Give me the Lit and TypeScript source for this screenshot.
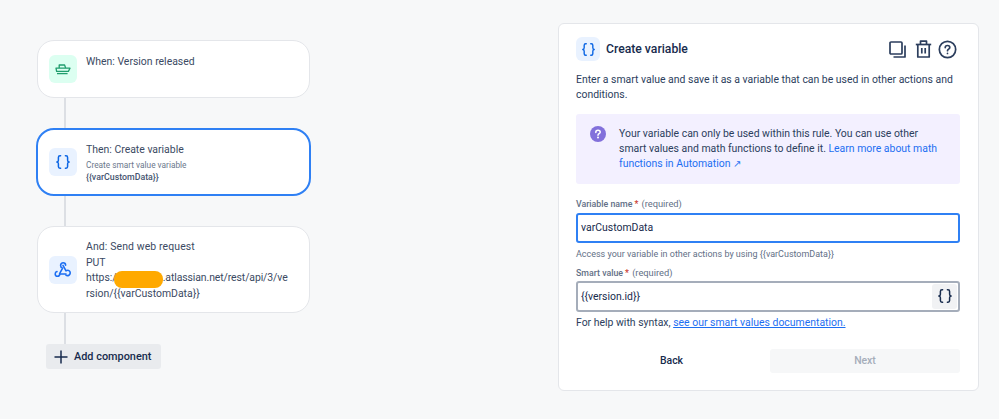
import { LitElement, html, css } from "lit";
import { customElement } from "lit/decorators.js";

const braces = (size: number, color: string) => html`<svg width=${size} height=${size} viewBox="0 0 16 16" fill="none" stroke=${color} stroke-width="1.5" stroke-linecap="round" stroke-linejoin="round">
  <path d="M5.6 1.8H5C3.9 1.8 3.4 2.4 3.4 3.4V6.2C3.4 7.2 2.9 7.8 1.9 8C2.9 8.2 3.4 8.8 3.4 9.8V12.6C3.4 13.6 3.9 14.2 5 14.2H5.6"/>
  <path d="M10.4 1.8H11C12.1 1.8 12.6 2.4 12.6 3.4V6.2C12.6 7.2 13.1 7.8 14.1 8C13.1 8.2 12.6 8.8 12.6 9.8V12.6C12.6 13.6 12.1 14.2 11 14.2H10.4"/>
</svg>`;

@customElement("app-root")
export class AppRoot extends LitElement {
  static styles = css`
    :host {
      display: flex;
      width: 999px;
      height: 419px;
      box-sizing: border-box;
      overflow: hidden;
      background: #f7f8f9;
      font-family: "Roboto", "Noto Sans", sans-serif;
      color: #2c3e5d;
      font-size: 10.45px;
    }
    .flow {
      width: 558px;
      flex: none;
      box-sizing: border-box;
      padding: 40px 0 0 37px;
      display: flex;
      flex-direction: column;
      align-items: flex-start;
    }
    .card {
      width: 273px;
      box-sizing: border-box;
      background: #fff;
      border: 1px solid #e4e6ea;
      border-radius: 17px;
      display: flex;
      gap: 9px;
      padding: 0 11px;
    }
    .c1 { height: 58px; padding-top: 14px; align-items: flex-start; }
    .c2 {
      width: 275px;
      height: 68px;
      margin-left: -1px;
      border: 2px solid #2f80f4;
      border-radius: 18px;
      align-items: center;
    }
    .c3 { height: 87px; align-items: center; }
    .ico {
      width: 28px;
      height: 28px;
      flex: none;
      border-radius: 6px;
      display: flex;
      align-items: center;
      justify-content: center;
      background: #e9f2ff;
    }
    .ico.green { background: #dcfff1; }
    .line { width: 2px; background: #dcdfe4; margin-left: 27px; }
    .l30 { height: 30px; }
    .l31 { height: 31px; }
    .t { line-height: 15px; color: #3b4a63; }
    .c1 .t { margin-top: -1px; }
    .sub { font-size: 8.3px; line-height: 12px; color: #6b778c; margin-top: 2px; }
    .var { font-size: 8.8px; line-height: 12px; font-weight: 500; color: #44546f; }
    .req { line-height: 15.6px; color: #3b4a63; white-space: nowrap; padding-top: 1px; }
    .req .t { margin-bottom: 1px; letter-spacing: 0.12px; }
    .url { letter-spacing: -0.1px; }
    .blob {
      display: inline-block;
      width: 49px;
      height: 17px;
      margin: -3px 0 -3px -3px;
      vertical-align: -4px;
      border-radius: 8px;
      background: #ffa900;
    }
    .add {
      margin-left: 9px;
      width: 115px;
      height: 25px;
      box-sizing: border-box;
      background: #e9ebee;
      border-radius: 3px;
      display: flex;
      align-items: center;
      gap: 6px;
      padding-left: 8px;
      font-weight: 500;
      font-size: 10.9px;
      color: #172b4d;
    }
    .panel {
      width: 421px;
      height: 368px;
      margin-top: 23px;
      box-sizing: border-box;
      background: #fff;
      border: 1px solid #e4e6ea;
      border-radius: 6px;
      padding: 13px 18px 0 17px;
      display: flex;
      flex-direction: column;
    }
    .head { display: flex; align-items: center; gap: 6px; height: 24px; }
    .head .ico { width: 24px; height: 24px; }
    .head h1 { margin: 0; font-size: 12.2px; font-weight: 500; color: #172b4d; flex: 1; }
    .acts { display: flex; align-items: center; gap: 6px; margin-right: 3px; }
    .acts .copy { margin-right: 3px; }
    .desc { margin: 11px 0 0; line-height: 15.3px; color: #2c3e5d; }
    .info {
      margin-top: 11px;
      height: 70px;
      box-sizing: border-box;
      background: #f3f0ff;
      border-radius: 3px;
      display: flex;
      gap: 13px;
      padding: 12px 14px;
      line-height: 15.3px;
      color: #2c3e5d;
    }
    .info svg { flex: none; }
    a { color: #1d6ff2; text-decoration: none; }
    a.u { text-decoration: underline; }
    .label { font-size: 8.8px; font-weight: 500; color: #626f86; line-height: 12px; }
    .label i { color: #c9372c; font-style: normal; margin-left: 2px; }
    .label span { font-size: 9.3px; font-weight: 400; color: #626f86; margin-left: 1px; }
    .l1 { margin-top: 14px; }
    .l2 { margin-top: 7px; }
    .input {
      height: 30px;
      box-sizing: border-box;
      margin-top: 3px;
      border: 2px solid #2f80f4;
      border-radius: 3px;
      display: flex;
      align-items: center;
      padding-left: 3px;
      color: #172b4d;
    }
    .input.two { height: 31px; border: 2px solid #a5adba; margin-top: 2px; padding-right: 1px; justify-content: space-between; }
    .brace { width: 25px; height: 25px; background: #f1f2f4; border-radius: 3px; display: flex; align-items: center; justify-content: center; }
    .hint { font-size: 8.97px; color: #626f86; line-height: 12px; margin-top: 5px; }
    .help { margin-top: 3px; line-height: 15px; color: #2c3e5d; }
    .btns { display: grid; grid-template-columns: 1fr 190px; margin-top: 19px; }
    .btn { height: 24px; display: flex; align-items: center; justify-content: center; font-weight: 500; border-radius: 3px; color: #172b4d; }
    .btn.back { padding-right: 3px; }
    .btn.off { background: #f6f7f8; color: #a5adba; font-weight: 500; }
  `;

  render() {
    return html`
      <div class="flow">
        <div class="card c1">
          <div class="ico green">
            <svg width="16" height="16" viewBox="0 0 16 16" fill="none" stroke="#1f9d6d" stroke-width="1.3" stroke-linejoin="round">
              <path d="M4.2 7V4H9.6L10.6 7"/>
              <path d="M1 7.2H15L13.4 10.4H1.6Z"/>
              <path d="M2 12.6H12.6"/>
            </svg>
          </div>
          <div class="t">When: Version released</div>
        </div>
        <div class="line l30"></div>
        <div class="card c2">
          <div class="ico">${braces(16, "#0c66e4")}</div>
          <div>
            <div class="t">Then: Create variable</div>
            <div class="sub">Create smart value variable</div>
            <div class="var">{{varCustomData}}</div>
          </div>
        </div>
        <div class="line l30"></div>
        <div class="card c3">
          <div class="ico">
            <svg width="18" height="18" viewBox="0 0 18 18" fill="none" stroke="#1d6ff2" stroke-width="1.6" stroke-linecap="round" stroke-linejoin="round">
              <path d="M5.6 12.6L8.6 7.2C7.2 6.6 6.6 5.6 6.6 4.4C6.6 3 7.7 1.8 9.1 1.8C10.5 1.8 11.6 2.9 11.6 4.2"/>
              <path d="M9 4.4L12 9.8C13.4 9 15 9.2 15.8 10.4C16.6 11.6 16.2 13.4 14.9 14.2C13.8 14.9 12.6 14.7 11.8 14"/>
              <path d="M12 13H5.9C5.6 14.5 4.7 15.3 3.5 15.3C2.1 15.3 1.2 14.2 1.2 13C1.2 11.8 1.9 10.9 3 10.6"/>
            </svg>
          </div>
          <div class="req">
            <div class="t">And: Send web request</div>
            PUT<br />https:/<span class="blob"></span><span class="url">.atlassian.net/rest/api/3/ve</span><br />rsion/{{varCustomData}}
          </div>
        </div>
        <div class="line l31"></div>
        <div class="add">
          <svg width="14" height="14" viewBox="0 0 14 14" stroke="#172b4d" stroke-width="1.5"><path d="M7 0.5V13.5M0.5 7H13.5"/></svg>
          Add component
        </div>
      </div>
      <div class="panel">
        <div class="head">
          <div class="ico">${braces(15, "#0c66e4")}</div>
          <h1>Create variable</h1>
          <div class="acts">
            <svg class="copy" width="17" height="17" viewBox="0 0 17 17" fill="none" stroke="#2c3e5d" stroke-width="1.7" stroke-linejoin="round">
              <rect x="1" y="1" width="12" height="12" rx="1"/>
              <path d="M16 4.5V16H4.5"/>
            </svg>
            <svg width="17" height="18" viewBox="0 0 17 18" fill="none" stroke="#2c3e5d" stroke-width="1.7" stroke-linejoin="round">
              <path d="M0.8 4.5H16.2"/>
              <path d="M5.5 4.5V1.2H11.5V4.5"/>
              <path d="M2.8 4.5V17H14.2V4.5"/>
              <path d="M6.8 8V13.5M10.2 8V13.5"/>
            </svg>
            <svg width="19" height="19" viewBox="0 0 20 20" fill="none" stroke="#2c3e5d" stroke-width="1.8" stroke-linecap="round">
              <circle cx="10" cy="10" r="8.6"/>
              <path d="M7.6 8C7.6 6.6 8.7 5.8 10 5.8C11.4 5.8 12.4 6.7 12.4 7.9C12.4 9.6 10 9.6 10 11.3"/>
              <path d="M10 14.1V14.2"/>
            </svg>
          </div>
        </div>
        <p class="desc">Enter a smart value and save it as a variable that can be used in other actions and conditions.</p>
        <div class="info">
          <svg width="16" height="16" viewBox="0 0 16 16">
            <circle cx="8" cy="8" r="8" fill="#8270db"/>
            <path d="M5.8 6.4C5.8 5.1 6.8 4.3 8 4.3C9.3 4.3 10.2 5.1 10.2 6.2C10.2 7.7 8 7.7 8 9.2" fill="none" stroke="#fff" stroke-width="1.5" stroke-linecap="round"/>
            <circle cx="8" cy="11.6" r="1" fill="#fff"/>
          </svg>
          <div>Your variable can only be used within this rule. You can use other smart values and math functions to define it. <a>Learn more about math functions in Automation ↗</a></div>
        </div>
        <div class="label l1">Variable name<i>*</i> <span>(required)</span></div>
        <div class="input">varCustomData</div>
        <div class="hint">Access your variable in other actions by using {{varCustomData}}</div>
        <div class="label l2">Smart value<i>*</i> <span>(required)</span></div>
        <div class="input two">{{version.id}}<div class="brace">${braces(16, "#172b4d")}</div></div>
        <div class="help">For help with syntax, <a class="u">see our smart values documentation.</a></div>
        <div class="btns">
          <div class="btn back">Back</div>
          <div class="btn off">Next</div>
        </div>
      </div>
    `;
  }
}
